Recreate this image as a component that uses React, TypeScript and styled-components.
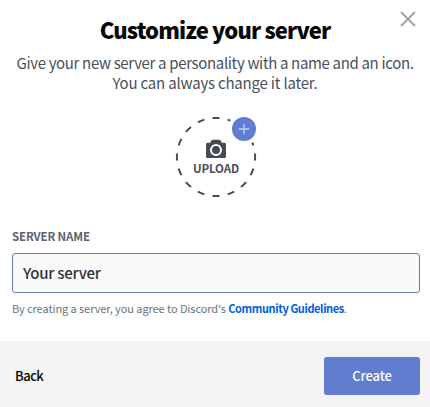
import React from "react";
import styled, { createGlobalStyle } from "styled-components";

const Global = createGlobalStyle`
  * { box-sizing: border-box; }
  body { margin: 0; background: #fff; font-family: "Noto Sans CJK SC", "Noto Sans", sans-serif; }
`;

const Modal = styled.main`
  width: 430px;
  height: 407px;
  display: flex;
  flex-direction: column;
  position: relative;
  overflow: hidden;
  background: #fff;
`;

const CloseButton = styled.button`
  position: absolute;
  top: 11px;
  right: 14px;
  width: 16px;
  height: 16px;
  padding: 0;
  border: 0;
  background: none;
  svg { display: block; }
`;

const Header = styled.header`
  padding-top: 14px;
  text-align: center;
`;

const Title = styled.h1`
  margin: 0;
  font-size: 22px;
  line-height: 30px;
  font-weight: 900;
  color: #060607;
  letter-spacing: -0.88px;
`;

const Subtitle = styled.p`
  margin: 9px 0 0;
  font-size: 15px;
  line-height: 20px;
  color: #4a505a;
`;

const Line = styled.span<{ $spacing: number }>`
  display: block;
  white-space: nowrap;
  letter-spacing: ${(p) => p.$spacing}px;
`;

const Uploader = styled.div`
  align-self: center;
  width: 84px;
  height: 84px;
  margin: 22px 0 0 4px;
  svg { display: block; }
`;

const UploadLabel = styled.text`
  font-size: 11.5px;
  font-weight: 700;
  letter-spacing: -0.1px;
  fill: #4a505a;
`;

const Form = styled.section`
  padding: 30px 10px 0 12px;
`;

const Label = styled.label`
  display: block;
  font-size: 11.5px;
  line-height: 15px;
  font-weight: 700;
  color: #5a6470;
  letter-spacing: -0.15px;
`;

const Field = styled.input`
  display: block;
  width: 100%;
  height: 40px;
  margin-top: 9px;
  padding: 0 10px 1px;
  border: 1px solid #677bc4;
  border-radius: 3px;
  outline: 0;
  background: #fafafa;
  color: #2e3338;
  font: 500 15px "Noto Sans CJK SC", "Noto Sans", sans-serif;
  letter-spacing: -0.25px;
`;

const Terms = styled.p`
  margin: 7px 0 0;
  font-size: 11px;
  line-height: 16px;
  white-space: nowrap;
  color: #6a7480;
  letter-spacing: -0.08px;
`;

const Guidelines = styled.strong`
  color: #0060df;
  font-weight: 700;
  letter-spacing: -0.4px;
`;

const Footer = styled.footer`
  height: 66px;
  margin-top: auto;
  padding: 4px 10px 0 15px;
  display: flex;
  align-items: center;
  justify-content: space-between;
  background: #f4f4f4;
`;

const Action = styled.button<{ $primary?: boolean }>`
  width: ${(p) => (p.$primary ? "96px" : "auto")};
  height: 38px;
  padding: 0 0 1px;
  border: 0;
  border-radius: 3px;
  background: ${(p) => (p.$primary ? "#617dd1" : "transparent")};
  color: ${(p) => (p.$primary ? "#fff" : "#060607")};
  font: 500 13px "Noto Sans CJK SC", "Noto Sans", sans-serif;
  letter-spacing: ${(p) => (p.$primary ? "-0.1px" : "-0.5px")};
`;

export default function App() {
  return (
    <>
      <Global />
      <Modal>
        <CloseButton aria-label="Close">
          <svg width="16" height="16" viewBox="0 0 16 16">
            <path d="M1 1 15 15M15 1 1 15" stroke="#a0a4aa" strokeWidth="2" />
          </svg>
        </CloseButton>
        <Header>
          <Title>Customize your server</Title>
          <Subtitle>
            <Line $spacing={-0.34}>Give your new server a personality with a name and an icon.</Line>
            <Line $spacing={-0.2}>You can always change it later.</Line>
          </Subtitle>
        </Header>
        <Uploader>
          <svg width="84" height="84" viewBox="0 0 84 84">
            <defs>
              <mask id="badgeGap">
                <rect width="84" height="84" fill="#fff" />
                <circle cx="69" cy="14" r="16" fill="#000" />
              </mask>
            </defs>
            <circle
              cx="41" cy="42" r="39.1" fill="none" stroke="#454c56" strokeWidth="2"
              pathLength="160" strokeDasharray="4.6 5.4" strokeDashoffset="2.3" mask="url(#badgeGap)"
            />
            <path
              d="M37 24.8h8l2 3h2.4a1.6 1.6 0 0 1 1.6 1.6v12a1.6 1.6 0 0 1-1.6 1.6H32.6a1.6 1.6 0 0 1-1.6-1.6v-12a1.6 1.6 0 0 1 1.6-1.6H35z"
              fill="#454c56"
            />
            <circle cx="41" cy="35" r="5" fill="#454c56" stroke="#fff" strokeWidth="2" />
            <UploadLabel x="41" y="58" textAnchor="middle">UPLOAD</UploadLabel>
            <circle cx="69" cy="14" r="12" fill="#617dd1" />
            <path d="M63.8 14h10.4M69 8.8v10.4" stroke="#c3cded" strokeWidth="1.3" />
          </svg>
        </Uploader>
        <Form>
          <Label htmlFor="name">SERVER NAME</Label>
          <Field id="name" defaultValue="Your server" />
          <Terms>
            By creating a server, you agree to Discord's <Guidelines>Community Guidelines</Guidelines>.
          </Terms>
        </Form>
        <Footer>
          <Action>Back</Action>
          <Action $primary>Create</Action>
        </Footer>
      </Modal>
    </>
  );
}
